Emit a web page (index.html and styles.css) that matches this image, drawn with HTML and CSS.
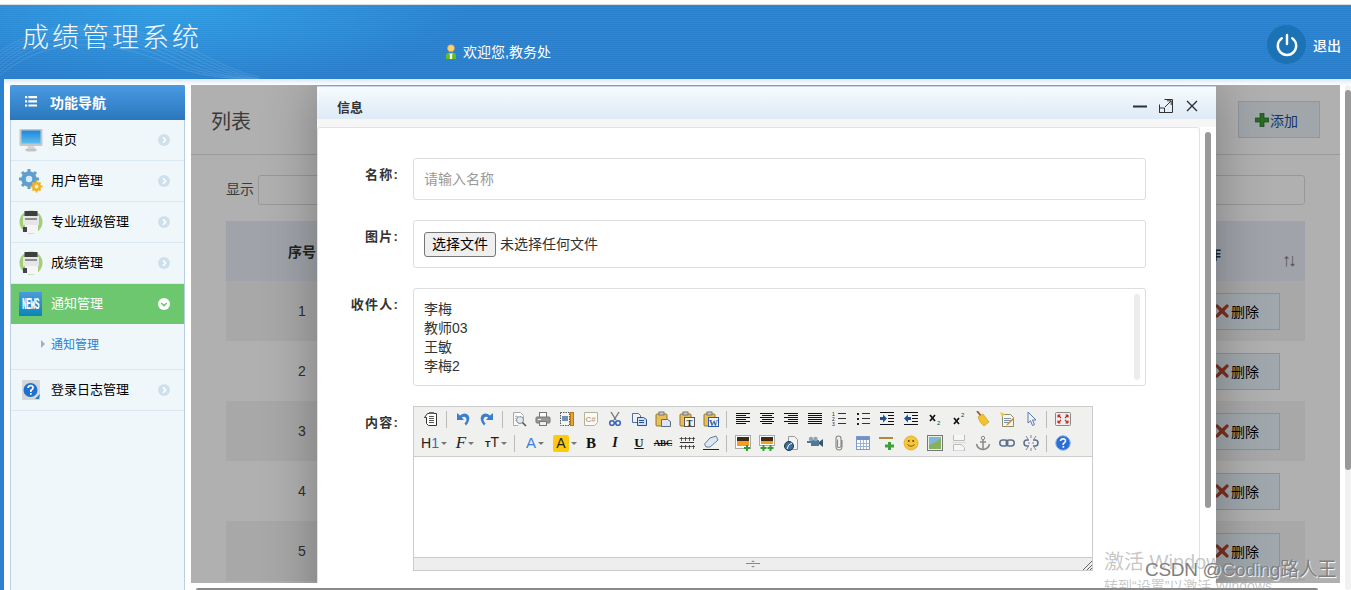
FILE: index.html
```html
<!DOCTYPE html>
<html lang="zh-CN">
<head>
<meta charset="utf-8">
<title>成绩管理系统</title>
<link rel="stylesheet" href="styles.css">
</head>
<body>
<div class="topline"></div>
<header class="header">
  <svg class="waves" viewBox="0 0 260 74" fill="none" stroke="#9fd0f2" stroke-opacity=".35" stroke-width=".6">
    <path d="M0 62C50 20 110 20 190 60 210 68 230 72 250 74"/><path d="M0 58C50 18 112 18 192 56 212 66 232 71 254 74"/><path d="M0 54C50 16 114 16 194 53 214 63 234 70 258 74"/><path d="M0 50C50 14 116 14 196 50 216 60 236 69 260 74"/><path d="M0 66C50 26 108 24 186 62 206 69 226 72 246 74"/><path d="M0 70C48 32 104 30 182 64 202 70 222 73 240 74"/><path d="M0 46C52 12 118 12 198 47 218 57 238 68 260 72"/>
  </svg>
  <h1 class="title">成绩管理系统</h1>
  <div class="welcome">
    <svg class="user-ico" viewBox="0 0 12 15"><circle cx="6" cy="4.2" r="3.4" fill="#fbd27a" stroke="#e8a63a" stroke-width=".7"/><path d="M1 15V11.5Q1 9 4 8.4L6 10 8 8.4Q11 9 11 11.5V15Z" fill="#62c01e"/><path d="M4.6 8.6 6 10 7.4 8.6 7 15H5Z" fill="#fff"/></svg>
    <span>欢迎您,教务处</span>
  </div>
  <div class="logout">
    <span class="power"><svg viewBox="0 0 24 24" fill="none" stroke="#fff" stroke-width="2.4" stroke-linecap="round"><path d="M12 2V11"/><path d="M6.8 5.2A9.2 9.2 0 1 0 17.2 5.2"/></svg></span>
    <span>退出</span>
  </div>
</header>

<main class="main">
  <nav class="sidebar">
    <div class="side-head">
      <svg class="list-ico" viewBox="0 0 12 11" fill="#fff"><path d="M0 0H2.2V2.2H0ZM3.4 0H12V2.2H3.4ZM0 4.2H2.2V6.4H0ZM3.4 4.2H12V6.4H3.4ZM0 8.4H2.2V10.6H0ZM3.4 8.4H12V10.6H3.4Z"/></svg>
      <span>功能导航</span>
    </div>
    <a class="nav-item">
      <svg class="nav-ico" viewBox="0 0 24 24"><defs><linearGradient id="scr" x1="0" y1="0" x2="0" y2="1"><stop offset="0" stop-color="#1f86d8"/><stop offset="1" stop-color="#5cc0f0"/></linearGradient></defs><rect x=".5" y="1" width="23" height="17" rx="1" fill="#c5c7c9"/><rect x="2.5" y="2.5" width="19" height="13" fill="url(#scr)"/><path d="M9 18H15L16 21H8Z" fill="#d6d6d6"/><ellipse cx="12" cy="22" rx="6" ry="1.6" fill="#c4c4c4"/></svg>
      <span class="nav-text">首页</span>
      <svg class="chev" viewBox="0 0 12 12"><circle cx="6" cy="6" r="6" fill="#cfe0ec"/><path d="M5 3.2 7.6 6 5 8.8" fill="none" stroke="#fff" stroke-width="1.6"/></svg>
    </a>
    <a class="nav-item">
      <svg class="nav-ico" viewBox="0 0 24 24"><circle cx="10" cy="10" r="7.800" fill="#5f9fd0"/><path d="M10 0V20M0 10H20M3 3 17 17M17 3 3 17" stroke="#5f9fd0" stroke-width="3"/><circle cx="10" cy="10" r="3.200" fill="#d9ecf8"/><circle cx="17.500" cy="17.500" r="4.600" fill="#f6b21d"/><path d="M17.500 11.500V23.500M11.500 17.500H23.500M13.500 13.500 21.500 21.500M21.500 13.500 13.500 21.500" stroke="#f6b21d" stroke-width="1.800"/><circle cx="17.500" cy="17.500" r="1.900" fill="#fff3c4"/></svg>
      <span class="nav-text">用户管理</span>
      <svg class="chev" viewBox="0 0 12 12"><circle cx="6" cy="6" r="6" fill="#cfe0ec"/><path d="M5 3.2 7.6 6 5 8.8" fill="none" stroke="#fff" stroke-width="1.6"/></svg>
    </a>
    <a class="nav-item">
      <svg class="nav-ico" viewBox="0 0 24 24"><circle cx="12" cy="12" r="11.500" fill="#a3cf78"/><rect x="5.500" y="1" width="13" height="5" fill="#3f3f3f"/><rect x="4" y="6" width="16" height="9" fill="#e6e6e6"/><rect x="6" y="8" width="12" height="2" fill="#8f8f8f"/><rect x="6" y="15" width="13" height="8" fill="#f5f5f5"/><rect x="4" y="17" width="4" height="5" fill="#445"/></svg>
      <span class="nav-text">专业班级管理</span>
      <svg class="chev" viewBox="0 0 12 12"><circle cx="6" cy="6" r="6" fill="#cfe0ec"/><path d="M5 3.2 7.6 6 5 8.8" fill="none" stroke="#fff" stroke-width="1.6"/></svg>
    </a>
    <a class="nav-item">
      <svg class="nav-ico" viewBox="0 0 24 24"><circle cx="12" cy="12" r="11.500" fill="#a3cf78"/><rect x="5.500" y="1" width="13" height="5" fill="#3f3f3f"/><rect x="4" y="6" width="16" height="9" fill="#e6e6e6"/><rect x="6" y="8" width="12" height="2" fill="#8f8f8f"/><rect x="6" y="15" width="13" height="8" fill="#f5f5f5"/><rect x="4" y="17" width="4" height="5" fill="#445"/></svg>
      <span class="nav-text">成绩管理</span>
      <svg class="chev" viewBox="0 0 12 12"><circle cx="6" cy="6" r="6" fill="#cfe0ec"/><path d="M5 3.2 7.6 6 5 8.8" fill="none" stroke="#fff" stroke-width="1.6"/></svg>
    </a>
    <a class="nav-item active">
      <svg class="nav-ico" viewBox="0 0 24 24"><defs><linearGradient id="news" x1="0" y1="0" x2="0" y2="1"><stop offset="0" stop-color="#4a9bdc"/><stop offset="1" stop-color="#0a86b4"/></linearGradient></defs><rect width="23" height="24" fill="url(#news)"/><text transform="scale(1 2)" x="11.500" y="8.300" text-anchor="middle" class="news-text">NEWS</text></svg>
      <span class="nav-text">通知管理</span>
      <svg class="chev" viewBox="0 0 12 12"><circle cx="6" cy="6" r="6" fill="#fff"/><path d="M3.2 5 6 7.6 8.8 5" fill="none" stroke="#6cc76f" stroke-width="1.6"/></svg>
    </a>
    <div class="sub-menu">
      <a class="sub-item"><i class="tri"></i>通知管理</a>
    </div>
    <a class="nav-item">
      <svg class="nav-ico" viewBox="0 0 24 24"><rect x="3" y="2" width="18" height="20" rx="1" fill="#d4d8d8"/><circle cx="11.500" cy="12" r="7" fill="#1f6fd0"/><path d="M9 10Q9.300 7.500 11.700 7.500 14.300 7.700 14 10 13.800 11.300 11.800 12.500V14" fill="none" stroke="#fff" stroke-width="1.700"/><rect x="11" y="15" width="1.700" height="1.700" fill="#fff"/><path d="M16 21 21 16 20 21Z" fill="#2b78c8"/></svg>
      <span class="nav-text">登录日志管理</span>
      <svg class="chev" viewBox="0 0 12 12"><circle cx="6" cy="6" r="6" fill="#cfe0ec"/><path d="M5 3.2 7.6 6 5 8.8" fill="none" stroke="#fff" stroke-width="1.6"/></svg>
    </a>
  </nav>

  <div class="frame-col">
    <section class="frame">
      <div class="page-head">
        <h2 class="page-title">列表</h2>
        <button class="add-btn"><svg class="plus" viewBox="0 0 14 14"><path d="M5 0H9V5H14V9H9V14H5V9H0V5H5Z" fill="#3f9a3a" stroke="#1f6a1f" stroke-width=".7"/></svg>添加</button>
      </div>
      <div class="filter">
        <span>显示</span>
        <span class="filter-box"></span>
      </div>
      <div class="table">
        <div class="row row-head"><span class="num">序号</span><span class="op-head">操作</span><span class="sort">↑↓</span></div>
        <div class="row stripe"><span class="num">1</span><button class="del-btn"><svg class="x-ico" viewBox="0 0 14 14"><path d="M2 0 7 4.500 12 0 14 2 9.500 7 14 12 12 14 7 9.500 2 14 0 12 4.500 7 0 2Z" fill="#b5452a"/></svg>删除</button></div>
        <div class="row"><span class="num">2</span><button class="del-btn"><svg class="x-ico" viewBox="0 0 14 14"><path d="M2 0 7 4.500 12 0 14 2 9.500 7 14 12 12 14 7 9.500 2 14 0 12 4.500 7 0 2Z" fill="#b5452a"/></svg>删除</button></div>
        <div class="row stripe"><span class="num">3</span><button class="del-btn"><svg class="x-ico" viewBox="0 0 14 14"><path d="M2 0 7 4.500 12 0 14 2 9.500 7 14 12 12 14 7 9.500 2 14 0 12 4.500 7 0 2Z" fill="#b5452a"/></svg>删除</button></div>
        <div class="row"><span class="num">4</span><button class="del-btn"><svg class="x-ico" viewBox="0 0 14 14"><path d="M2 0 7 4.500 12 0 14 2 9.500 7 14 12 12 14 7 9.500 2 14 0 12 4.500 7 0 2Z" fill="#b5452a"/></svg>删除</button></div>
        <div class="row stripe"><span class="num">5</span><button class="del-btn"><svg class="x-ico" viewBox="0 0 14 14"><path d="M2 0 7 4.500 12 0 14 2 9.500 7 14 12 12 14 7 9.500 2 14 0 12 4.500 7 0 2Z" fill="#b5452a"/></svg>删除</button></div>
      </div>

      <div class="mask"></div>
      <div class="modal">
        <div class="modal-head">
          <span class="modal-title">信息</span>
          <span class="win-btns">
            <svg viewBox="0 0 14 14"><path d="M0 7.500H14" stroke="#2b2f3a" stroke-width="2"/></svg>
            <svg viewBox="0 0 14 14" fill="none" stroke="#333"><path d="M5.500 .5H13.500V13.500H.5V5.500"/><path d="M.5 9H5.500V13.500H.5Z"/><path d="M6 8 12 2M8 1.800H12.200V6"/></svg>
            <svg viewBox="0 0 14 14" fill="none" stroke="#2b2f3a" stroke-width="1.400"><path d="M2 2 12 12M12 2 2 12"/></svg>
          </span>
        </div>
        <div class="modal-body">
          <div class="panel">
            <div class="form-row row-name">
              <label class="label">名称:</label>
              <div class="field field-name"><span class="placeholder">请输入名称</span></div>
            </div>
            <div class="form-row row-file">
              <label class="label">图片:</label>
              <div class="field field-file"><button class="file-btn">选择文件</button><span class="file-none">未选择任何文件</span></div>
            </div>
            <div class="form-row row-to">
              <label class="label">收件人:</label>
              <div class="field field-to">
                <div class="to-list"><span>李梅</span><span>教师03</span><span>王敏</span><span>李梅2</span></div>
                <i class="to-scroll"></i>
              </div>
            </div>
            <div class="form-row row-editor">
              <label class="label">内容:</label>
              <div class="editor">
                <div class="tb">
                  <div class="tb-row">
                    <svg class="ic" viewBox="0 0 16 16"><path d="M4.500 2.500H13.500V14.500H5.500L3.500 12.500V6.500H1.500Z" fill="#fff" stroke="#333"/><path d="M6 5.500H11M6 7.500H11M6 9.500H11M6 11.500H11" stroke="#555"/><rect x="6" y="1" width="5" height="2" fill="#666"/></svg>
                    <i class="sep"></i>
                    <svg class="ic" viewBox="0 0 16 16"><path d="M2 2V9H9L6.800 6.500Q9.500 5 11 7 12.500 9.500 9.500 12.500L11 14.500Q16 9 13.500 4.500 10 .5 5 4.500Z" fill="#3a7ecf"/></svg>
                    <svg class="ic" viewBox="0 0 16 16"><path d="M14 2V9H7L9.200 6.500Q6.500 5 5 7 3.500 9.500 6.500 12.500L5 14.500Q0 9 2.500 4.500 6 .5 11 4.500Z" fill="#3a7ecf"/></svg>
                    <i class="sep"></i>
                    <svg class="ic" viewBox="0 0 16 16"><path d="M2.500 1.500H9.500L12.500 4.500V8M2.500 1.500V14.500H7" fill="#fff" stroke="#aaa"/><circle cx="9" cy="9" r="3.500" fill="#dcebf7" stroke="#888"/><path d="M11.500 11.500 15 15" stroke="#555" stroke-width="1.600"/><path d="M4 5.500H9M4 7.500H6M4 9.500H5" stroke="#bbb"/></svg>
                    <svg class="ic" viewBox="0 0 16 16"><rect x="4.500" y="1.500" width="7" height="5" fill="#fff" stroke="#777"/><rect x="1" y="6" width="14" height="6" rx="1" fill="#999" stroke="#777"/><rect x="4.500" y="10.500" width="7" height="4" fill="#eee" stroke="#777"/><path d="M3 8.500H6" stroke="#eee"/></svg>
                    <svg class="ic" viewBox="0 0 16 16"><rect x="1.500" y="1.500" width="9" height="13" fill="#f4f4f4" stroke="#555" stroke-dasharray="1.500 1"/><rect x="3" y="5" width="6" height="5" fill="#6f8fb3"/><rect x="11.500" y="1.500" width="3" height="13" fill="#e8a33a" stroke="#b97a16"/></svg>
                    <svg class="ic" viewBox="0 0 16 16"><path d="M1.500 1.500H14.500V11.500L11.500 14.500H1.500Z" fill="#fbfbf6" stroke="#b5b0a0"/><text x="2.500" y="10.500" class="csharp">C#</text></svg>
                    <svg class="ic" viewBox="0 0 16 16"><path d="M4 1 9 9M12 1 7 9" stroke="#777" stroke-width="1.400"/><circle cx="5" cy="12" r="2.300" fill="none" stroke="#3c66b8" stroke-width="1.600"/><circle cx="11" cy="12" r="2.300" fill="none" stroke="#3c66b8" stroke-width="1.600"/></svg>
                    <svg class="ic" viewBox="0 0 16 16"><path d="M1.500 2.500H7.500L9.500 4.500V11.500H1.500Z" fill="#eef3fb" stroke="#4d6ea8"/><path d="M6.500 6.500H12.500L15.500 8.500V14.500H6.500Z" fill="#cfe0f5" stroke="#2b4f93"/><path d="M8 9.500H13M8 11.500H13" stroke="#2b4f93"/></svg>
                    <svg class="ic" viewBox="0 0 16 16"><rect x="1" y="3" width="11" height="12" rx="1" fill="#e7c05a" stroke="#96742a"/><rect x="4" y="1" width="5" height="3" fill="#c9c9c9" stroke="#777"/><path d="M6.500 8.500H12.500L15.500 10.500V15.500H6.500Z" fill="#dfe6f3" stroke="#5c6b88"/></svg>
                    <svg class="ic" viewBox="0 0 16 16"><rect x="1" y="3" width="11" height="12" rx="1" fill="#e7c05a" stroke="#96742a"/><rect x="4" y="1" width="5" height="3" fill="#c9c9c9" stroke="#777"/><rect x="5.500" y="6.500" width="10" height="9" fill="#f4f4f4" stroke="#555"/><text x="10.500" y="14.500" text-anchor="middle" class="ic-t">T</text></svg>
                    <svg class="ic" viewBox="0 0 16 16"><rect x="1" y="3" width="11" height="12" rx="1" fill="#e7c05a" stroke="#96742a"/><rect x="4" y="1" width="5" height="3" fill="#c9c9c9" stroke="#777"/><rect x="5.500" y="6.500" width="10" height="9" fill="#f4f4f4" stroke="#2b5ca8"/><text x="10.500" y="14.500" text-anchor="middle" class="ic-w">W</text></svg>
                    <i class="sep"></i>
                    <svg class="ic" viewBox="0 0 16 16"><path d="M1 2.500H15M1 4.500H11M1 6.500H15M1 8.500H11M1 10.500H15M1 12.500H11" stroke="#111"/></svg>
                    <svg class="ic" viewBox="0 0 16 16"><path d="M1 2.500H15M3 4.500H13M1 6.500H15M3 8.500H13M1 10.500H15M3 12.500H13" stroke="#111"/></svg>
                    <svg class="ic" viewBox="0 0 16 16"><path d="M1 2.500H15M5 4.500H15M1 6.500H15M5 8.500H15M1 10.500H15M5 12.500H15" stroke="#111"/></svg>
                    <svg class="ic" viewBox="0 0 16 16"><path d="M1 2.500H15M1 4.500H15M1 6.500H15M1 8.500H15M1 10.500H15M1 12.500H15" stroke="#111"/></svg>
                    <svg class="ic" viewBox="0 0 16 16"><path d="M7 2.500H15M7 7.500H15M7 12.500H15" stroke="#333"/><text x="1" y="5" class="ic-n">1</text><text x="1" y="10" class="ic-n">2</text><text x="1" y="15" class="ic-n">3</text></svg>
                    <svg class="ic" viewBox="0 0 16 16"><path d="M7 2.500H15M7 7.500H15M7 12.500H15" stroke="#333"/><path d="M2 2H4V4H2ZM2 7H4V9H2ZM2 12H4V14H2Z" fill="#222"/></svg>
                    <svg class="ic" viewBox="0 0 16 16"><path d="M1 1.500H15M9 4.500H15M9 7.500H15M9 10.500H15M1 13.500H15" stroke="#111"/><path d="M1 6H4V3.500L8 7.500 4 11.500V9H1Z" fill="#1f4f8f"/></svg>
                    <svg class="ic" viewBox="0 0 16 16"><path d="M1 1.500H15M9 4.500H15M9 7.500H15M9 10.500H15M1 13.500H15" stroke="#111"/><path d="M8 6H5V3.500L1 7.500 5 11.500V9H8Z" fill="#1f4f8f"/></svg>
                    <svg class="ic" viewBox="0 0 16 16"><path d="M3 4 8 10M8 4 3 10" stroke="#111" stroke-width="1.700"/><text x="10" y="13.500" class="ic-s">2</text></svg>
                    <svg class="ic" viewBox="0 0 16 16"><path d="M3 7 8 13M8 7 3 13" stroke="#111" stroke-width="1.700"/><text x="10" y="6" class="ic-s">2</text></svg>
                    <svg class="ic" viewBox="0 0 16 16"><path d="M2 0 6 5" stroke="#9a5a1c" stroke-width="1.800"/><path d="M3 6 8 3 14 11 9 15Q4 11 3 6Z" fill="#f2c230" stroke="#c9951a" stroke-width=".6"/></svg>
                    <svg class="ic" viewBox="0 0 16 16"><path d="M3.500 3.500H11.500L14.500 6.500V15.500H3.500Z" fill="#fbf7e6" stroke="#8d8d6a"/><path d="M5 7.500H12M5 9.500H12M5 11.500H10" stroke="#7a8fb5"/><path d="M1 1 6 3 3 6Z" fill="#f5c632"/><path d="M14 7 8 13 7 14.500 9 14 15 8Z" fill="#e08a2a"/></svg>
                    <svg class="ic" viewBox="0 0 16 16"><path d="M5 1V12L7.500 9.800 9.500 14.500 11.500 13.600 9.500 9H13Z" fill="#eef3fb" stroke="#5a7ba8"/></svg>
                    <i class="sep"></i>
                    <svg class="ic" viewBox="0 0 16 16"><rect x=".5" y="1.500" width="15" height="13" rx="1" fill="#eee" stroke="#888"/><path d="M3 4 6 7M3 4H5.500M3 4V6.500M13 4 10 7M13 4H10.500M13 4V6.500M3 12 6 9M3 12H5.500M3 12V9.500M13 12 10 9M13 12H10.500M13 12V9.500" stroke="#c2261b" stroke-width="1.100" fill="none"/></svg>
                  </div>
                  <div class="tb-row">
                    <span class="dd dd-h"><span class="h-txt">H<b>1</b></span><i class="caret"></i></span>
                    <span class="dd dd-f"><span class="f-txt">F</span><i class="caret"></i></span>
                    <span class="dd dd-t"><span class="t-txt"><small>T</small>T</span><i class="caret"></i></span>
                    <i class="sep"></i>
                    <span class="dd dd-a"><span class="a-txt">A</span><i class="caret"></i></span>
                    <span class="dd dd-hl"><span class="hl-txt">A</span><i class="caret"></i></span>
                    <span class="ic-txt ic-b">B</span>
                    <span class="ic-txt ic-i">I</span>
                    <span class="ic-txt ic-u">U</span>
                    <span class="ic-txt ic-abc">ABC</span>
                    <svg class="ic" viewBox="0 0 16 16"><path d="M1 7.500H15" stroke="#333"/><path d="M2.500 2V6M.5 3.500H4.500M6.500 2V6M4.500 3.500H8.500M10.500 2V6M8.500 3.500H12.500M14.500 2V6M12.500 3.500H16M2.500 10V14M.5 11.500H4.500M6.500 10V14M4.500 11.500H8.500M10.500 10V14M8.500 11.500H12.500M14.500 10V14M12.500 11.500H16" stroke="#333" stroke-width=".8"/></svg>
                    <svg class="ic" viewBox="0 0 16 16"><path d="M7 3 13 1 15 5 7 12 3 12 1.500 9Z" fill="#dce7f5" stroke="#6a7d99"/><path d="M0 14.500H16" stroke="#222"/></svg>
                    <i class="sep"></i>
                    <svg class="ic" viewBox="0 0 16 16"><rect x=".5" y=".5" width="15" height="13" fill="#fff" stroke="#aaa"/><rect x="2" y="2" width="12" height="5" fill="#3b2a16"/><rect x="2" y="6" width="12" height="5" fill="#f2a020"/><path d="M11 10H13V12H15V14H13V16H11V14H9V12H11Z" fill="#2f9e2f"/></svg>
                    <svg class="ic" viewBox="0 0 16 16"><rect x=".5" y=".5" width="15" height="10" fill="#fff" stroke="#aaa"/><rect x="2" y="2" width="12" height="4" fill="#3b2a16"/><rect x="2" y="6" width="12" height="3" fill="#f2a020"/><path d="M3.500 10H5.500V12H7.500V14H5.500V16H3.500V14H1.500V12H3.500ZM10.500 10H12.500V12H14.500V14H12.500V16H10.500V14H8.500V12H10.500Z" fill="#2f9e2f"/></svg>
                    <svg class="ic" viewBox="0 0 16 16"><path d="M5.500 1.500H11.500L14.500 4.500V14.500H5.500Z" fill="#f4f4f4" stroke="#999"/><circle cx="6" cy="11" r="4.500" fill="#3a6f9e" stroke="#234"/><path d="M9 8Q5 9 4 14" stroke="#fff" fill="none"/></svg>
                    <svg class="ic" viewBox="0 0 16 16"><rect x="4" y="5" width="8" height="6" fill="#54788f"/><circle cx="4" cy="4" r="2.200" fill="#8aa5b8"/><circle cx="8.500" cy="4" r="2.200" fill="#8aa5b8"/><path d="M12 7 16 4V12L12 9Z" fill="#3b566a"/><path d="M0 6H4V8H0Z" fill="#54788f"/></svg>
                    <svg class="ic" viewBox="0 0 16 16"><path d="M11 5V11.500Q11 15 8 15T5 11.500V3.500Q5 1 7.500 1T10 3.500V11Q10 12.500 8 12.500T6.500 11V4.500" fill="none" stroke="#888" stroke-width="1.100"/></svg>
                    <svg class="ic" viewBox="0 0 16 16"><rect x="1.500" y="1.500" width="13" height="13" fill="#fff" stroke="#7f9ac9"/><rect x="2" y="2" width="12" height="3" fill="#6f90d0"/><path d="M2 8.500H14M2 11.500H14M5.500 5V14M8.500 5V14M11.500 5V14" stroke="#9db3d8"/></svg>
                    <svg class="ic" viewBox="0 0 16 16"><rect x="0" y="2" width="14" height="2" fill="#b08a3a"/><path d="M9 7H12V9.500H15V12.500H12V15H9V12.500H6V9.500H9Z" fill="#3aa23a"/></svg>
                    <svg class="ic" viewBox="0 0 16 16"><circle cx="8" cy="8" r="7" fill="#f5c53c" stroke="#dfa71f" stroke-width=".8"/><circle cx="5.800" cy="6" r="1" fill="#5b4a12"/><circle cx="10.200" cy="6" r="1" fill="#5b4a12"/><path d="M4.500 9.500Q8 13 11.500 9.500" fill="none" stroke="#7a5a10"/></svg>
                    <svg class="ic" viewBox="0 0 16 16"><rect x=".5" y=".5" width="15" height="15" fill="#e8efe4" stroke="#777"/><rect x="2" y="2" width="12" height="12" fill="#7fb6dc"/><path d="M2 14V10L7 8 14 3V14Z" fill="#86b25e"/></svg>
                    <svg class="ic" viewBox="0 0 16 16"><path d="M2.500 0V5.500H13.500V0M2.500 16V9.500H10.500L13.500 12.500V16Z" fill="#f6f6f6" stroke="#bbb"/><path d="M1 7.500H15" stroke="#ddd"/></svg>
                    <svg class="ic" viewBox="0 0 16 16"><circle cx="8" cy="3" r="1.700" fill="none" stroke="#888"/><path d="M8 5V14M5 7H11" stroke="#888" stroke-width="1.500"/><path d="M1.500 9Q2.500 14 8 14.500 13.500 14 14.500 9" fill="none" stroke="#888" stroke-width="1.500"/></svg>
                    <svg class="ic" viewBox="0 0 16 16"><rect x=".8" y="5" width="8" height="6" rx="3" fill="none" stroke="#5c6f8c" stroke-width="1.500"/><rect x="7.200" y="5" width="8" height="6" rx="3" fill="none" stroke="#5c6f8c" stroke-width="1.500"/></svg>
                    <svg class="ic" viewBox="0 0 16 16"><path d="M6 5H4Q1 5 1 8T4 11H6M10 5H12Q15 5 15 8T12 11H10" fill="none" stroke="#5c6f8c" stroke-width="1.500"/><path d="M5 8H7M9 8H11M3 1 5 4M8 0V3M13 1 11 4M3 15 5 12M8 16V13M13 15 11 12" stroke="#667" stroke-width=".8"/></svg>
                    <i class="sep"></i>
                    <svg class="ic" viewBox="0 0 16 16"><circle cx="8" cy="8" r="7.200" fill="#2a6fd6" stroke="#7fa8e8"/><path d="M5.500 6Q5.800 3.800 8.200 3.800 10.800 4 10.500 6.200 10.300 7.500 8.300 8.600V10" fill="none" stroke="#fff" stroke-width="1.600"/><rect x="7.500" y="11" width="1.700" height="1.700" fill="#fff"/></svg>
                  </div>
                </div>
                <div class="edit-area"></div>
                <div class="edit-foot">
                  <svg class="grip" viewBox="0 0 16 8" fill="none" stroke="#888"><path d="M1 3.500H15"/><path d="M6 2H10L8 .5ZM6 6H10L8 7.500Z" fill="#888" stroke="none"/></svg>
                  <svg class="corner" viewBox="0 0 10 10" stroke="#666"><path d="M1 10 10 1M5 10 10 5M8 10 10 8"/></svg>
                </div>
              </div>
            </div>
          </div>
          <div class="modal-scroll"><i></i></div>
        </div>
      </div>
    </section>
    <div class="hscroll"></div>
  </div>
  <div class="vscroll"><i></i></div>
</main>

<div class="wm wm-1">激活 Windows</div>
<div class="wm wm-2">转到“设置”以激活 Windows。</div>
<div class="wm wm-3">CSDN @Coding路人王</div>
</body>
</html>
```

FILE: styles.css
```css
* { box-sizing: border-box; }
html, body { margin: 0; height: 590px; overflow: hidden; }
body {
  position: relative;
  background: #fff;
  font-family: "Liberation Sans", "Noto Sans CJK SC", sans-serif;
  font-size: 13px;
  color: #333;
}
i { font-style: normal; display: block; }
svg { display: block; flex: none; }
button { font-family: inherit; }

.topline { height: 5px; background: #fff; border-bottom: 1px solid #ddd; }

.header {
  position: relative;
  height: 74px;
  display: flex;
  align-items: flex-start;
  overflow: hidden;
  color: #fff;
  background:
    repeating-linear-gradient(rgba(255,255,255,.025) 0 1px, rgba(0,0,0,.02) 1px 2px),
    radial-gradient(ellipse 300px 80px at 170px 0, #31a0e6 0, rgba(49,160,230,0) 100%),
    linear-gradient(#2a84d2, #2a80cd);
}
.waves { position: absolute; left: 0; top: 0; width: 260px; height: 74px; }
.title {
  position: relative;
  margin: 13px 0 0 22px;
  width: 407px;
  font: 300 27px/36px "Noto Sans CJK SC", sans-serif;
  letter-spacing: 3px;
  color: #f2f8fd;
}
.welcome { position: relative; display: flex; align-items: center; gap: 6px; margin: 38px 0 0 16px; height: 16px; font-size: 14px; }
.user-ico { width: 12px; height: 15px; }
.logout { margin: 20px 10px 0 auto; display: flex; align-items: center; gap: 7px; font-size: 14px; font-weight: 500; }
.power { width: 39px; height: 39px; border-radius: 50%; background: #1b73b5; display: flex; align-items: center; justify-content: center; }
.power svg { width: 24px; height: 24px; }

.main {
  height: 511px;
  overflow: hidden;
  display: flex;
  align-items: flex-start;
  gap: 6px;
  padding: 6px 0 0 6px;
  border-left: 4px solid #2a82d0;
  background: linear-gradient(#dbe9f4, #fff 6px) no-repeat;
}

.sidebar {
  width: 175px;
  height: 520px;
  background: #eff7fb;
  border: 1px solid #b8d0e2;
  border-top: 0;
  flex: none;
}
.side-head {
  height: 35px;
  margin: 0 -1px;
  padding-bottom: 2px;
  display: flex;
  align-items: center;
  background: linear-gradient(#4a9ae2, #2a77bc);
  color: #fff;
  font-weight: 700;
  font-size: 14px;
  border-radius: 2px 2px 0 0;
}
.list-ico { width: 12px; height: 11px; margin: 0 13px 0 15px; }
.nav-item {
  height: 41px;
  display: flex;
  align-items: center;
  border-bottom: 1px solid #d9e8f2;
  color: #000;
}
.nav-ico { width: 24px; height: 24px; margin-left: 8px; margin-bottom: 1px; }
.nav-text { margin: 0 0 3px 8px; flex: 1; }
.chev { width: 12px; height: 12px; margin-right: 14px; }
.active { background: #6cc76f; color: #fff; border-bottom: 0; height: 40px; }
.news-text { font: 700 8px "Liberation Mono", monospace; fill: #fff; letter-spacing: -.6px; }
.sub-menu { height: 46px; padding-left: 30px; border-bottom: 1px solid #d9e8f2; display: flex; align-items: center; }
.sub-item { display: flex; align-items: center; gap: 6px; color: #2a7fd0; font-size: 12px; margin-bottom: 6px; }
.tri { width: 0; height: 0; border: 4px solid transparent; border-left: 4px solid #9fb2c4; border-right: 0; }

.frame-col { width: 1149px; flex: none; }
.frame {
  position: relative;
  height: 498px;
  overflow: hidden;
  padding: 0 35px;
  background: #fff;
}
.page-head {
  height: 70px;
  margin: 0 -35px;
  padding: 16px 20px 0;
  display: flex;
  justify-content: space-between;
  align-items: flex-start;
  border-bottom: 1px solid #e0e0e0;
}
.page-title { margin: 8px 0 0; font: 400 20px/24px "Noto Sans CJK SC", sans-serif; color: #555; }
.add-btn {
  width: 82px;
  height: 37px;
  display: flex;
  align-items: center;
  justify-content: center;
  gap: 1px;
  background: #e8f1f7;
  border: 1px solid #cfdbe6;
  color: #1d4f9c;
  font-size: 14px;
  padding: 0 5px 0 0;
}
.plus { width: 14px; height: 14px; }
.filter { height: 66px; padding-top: 20px; display: flex; align-items: flex-start; gap: 4px; color: #555; line-height: 28px; font-size: 14px; }
.filter-box { width: 1047px; height: 30px; border: 1px solid #ddd; border-radius: 3px; }
.table { width: 1079px; }
.row { height: 60px; display: flex; align-items: center; position: relative; font-size: 14px; }
.row-head { background: #e8eef6; font-weight: 700; height: 60px; }
.stripe { background: #f4f4f4; }
.num { width: 152px; text-align: center; color: #444; }
.row-head .num { color: #333; }
.op-head { position: absolute; left: 967px; top: 22px; }
.sort { position: absolute; right: 11px; top: 29px; color: #777; font-weight: 400; font-size: 18px; letter-spacing: -3px; }
.del-btn {
  margin-left: auto;
  margin-right: 25px;
  width: 90px;
  height: 37px;
  display: flex;
  align-items: center;
  justify-content: center;
  gap: 2px;
  padding: 0 0 0 4px;
  background: #eaf4fb;
  border: 1px solid #c8d5e0;
  color: #000;
  font-size: 14px;
}
.x-ico { width: 14px; height: 14px; }

.mask { position: absolute; inset: 0; background: rgba(0,0,0,.31); }
.modal {
  position: absolute;
  left: 126px;
  top: 1px;
  width: 899px;
  height: 600px;
  background: #fff;
  box-shadow: 0 0 50px rgba(0,0,0,.3);
}
.modal-head {
  height: 33px;
  padding: 6px 17px 0 20px;
  display: flex;
  align-items: center;
  justify-content: space-between;
  background: linear-gradient(#f6fbfe, #deeaf5);
  border-top: 1px solid #c5d8ea;
}
.modal-title { font-weight: 700; font-size: 13px; color: #333; }
.win-btns { display: flex; gap: 12px; }
.win-btns svg { width: 14px; height: 14px; }
.modal-body { display: flex; background: #f6f6f6; padding-top: 8px; height: 567px; }
.panel {
  width: 883px;
  background: #fff;
  border: 1px solid #e2e2e2;
  border-radius: 3px;
  flex: none;
  padding-top: 30px;
}
.modal-scroll { flex: 1; background: #fff; padding: 5px 5px 0; }
.modal-scroll i { width: 6px; height: 376px; background: #999; border-radius: 3px; }
.form-row { display: flex; align-items: flex-start; margin-bottom: 20px; }
.label { width: 81px; text-align: right; font-weight: 700; color: #333; padding-top: 8px; line-height: 18px; letter-spacing: 1.2px; flex: none; }
.field { width: 733px; margin-left: 14px; border: 1px solid #dedede; border-radius: 3px; background: #fff; font-size: 14px; }
.field-name { height: 42px; padding: 10px 10px 0; line-height: 20px; }
.placeholder { color: #999; }
.field-file { height: 48px; display: flex; align-items: center; padding-left: 10px; gap: 4px; }
.file-btn {
  width: 72px;
  height: 25px;
  padding: 0;
  font-size: 14px;
  line-height: 20px;
  color: #000;
  background: #efefef;
  border: 1px solid #767676;
  border-radius: 3px;
}
.file-none { margin-bottom: 2px; }
.field-to { height: 98px; position: relative; padding: 11px 10px 0; }
.to-list { display: flex; flex-direction: column; }
.to-list span { height: 19px; line-height: 19px; }
.to-scroll { position: absolute; right: 5px; top: 5px; width: 6px; height: 86px; border-radius: 3px; background: #ececec; }
.row-editor { margin-bottom: 0; }
.editor { width: 680px; margin-left: 14px; border: 1px solid #ccc; border-top: 0; flex: none; }
.tb { height: 51px; background: #f0f0ee; border: 1px solid #ccc; padding: 0 0 0 5px; display: flex; flex-direction: column; margin: 0 -1px; }
.tb-row { height: 24px; display: flex; align-items: center; }
.ic { width: 24px; height: 16px; }
.sep { width: 8px; height: 17px; position: relative; }
.sep::before { content: ""; position: absolute; left: 3px; top: 0; width: 1px; height: 17px; background: #bbb; }
.dd { display: flex; align-items: center; justify-content: center; gap: 2px; height: 20px; color: #222; }
.dd-h { width: 30px; }
.dd-f { width: 32px; }
.dd-t { width: 30px; }
.dd-a { width: 32px; }
.dd-hl { width: 28px; }
.caret { width: 0; height: 0; border: 3px solid transparent; border-top: 3px solid #777; border-bottom: 0; }
.h-txt { font-size: 14px; line-height: 16px; }
.h-txt b { color: #2c6fc4; font-weight: 400; }
.f-txt { font: italic 17px "Liberation Serif", serif; }
.t-txt { font-size: 14px; line-height: 16px; }
.t-txt small { font-size: 9px; font-weight: 700; }
.a-txt { font-size: 15px; color: #3a7ee0; line-height: 16px; }
.hl-txt { width: 16px; height: 17px; border-radius: 2px; background: #ffc90e; text-align: center; font-size: 14px; line-height: 17px; }
.ic-txt { width: 24px; text-align: center; color: #111; font-family: "Liberation Serif", serif; }
.ic-b { font-weight: 700; font-size: 15px; }
.ic-i { font-weight: 700; font-style: italic; font-size: 14px; }
.ic-u { font-weight: 700; font-size: 13px; text-decoration: underline; }
.ic-abc { font-size: 9px; font-weight: 700; text-decoration: line-through; letter-spacing: -.2px; }
.csharp { font: 700 8px "Liberation Sans", sans-serif; fill: #c9a680; }
.ic-t { font: 700 9px "Liberation Serif", serif; fill: #222; }
.ic-w { font: 700 9px "Liberation Serif", serif; fill: #2b5ca8; }
.ic-n { font: 5px "Liberation Sans", sans-serif; fill: #222; }
.ic-s { font: 6px "Liberation Sans", sans-serif; fill: #333; }
.edit-area { height: 100px; background: #fff; }
.edit-foot { height: 13px; background: #eee; border-top: 1px solid #ccc; position: relative; display: flex; justify-content: center; align-items: center; }
.grip { width: 16px; height: 8px; }
.corner { position: absolute; right: 0; bottom: 0; width: 10px; height: 10px; }

.hscroll { height: 2px; margin: 5px 0 0 5px; width: 1122px; background: #8a8a8a; border-radius: 2px 2px 0 0; }
.vscroll { width: 6px; height: 505px; margin-left: -1px; background: #f1f1f1; border-radius: 3px; }
.vscroll i { width: 6px; height: 380px; margin-top: 5px; background: #999; border-radius: 3px; }

.wm { position: absolute; white-space: nowrap; }
.wm-1 { left: 1104px; top: 550px; font-size: 20px; line-height: 24px; color: rgba(150,150,150,.55); }
.wm-2 { left: 1104px; top: 577px; font-size: 14px; line-height: 18px; color: rgba(150,150,150,.55); }
.wm-3 { left: 1145px; top: 557px; font-size: 19px; line-height: 26px; letter-spacing: -.3px; color: #808080; text-shadow: 1px 1px 1px #fff; }
```
